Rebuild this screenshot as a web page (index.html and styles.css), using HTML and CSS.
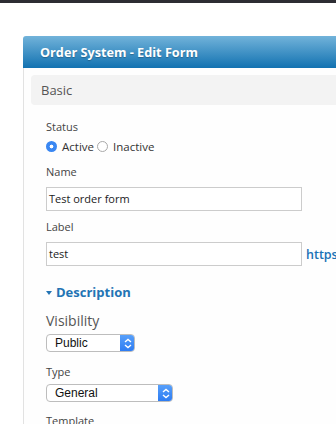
FILE: index.html
```html
<!DOCTYPE html>
<html>
<head>
<meta charset="utf-8">
<link rel="stylesheet" href="styles.css">
</head>
<body>
<div class="topbar"></div>
<div class="panel">
  <div class="panel-header">Order System - Edit Form</div>
  <div class="panel-body">
    <div class="section-bar">Basic</div>
    <div class="form">
      <div class="field-label">Status</div>
      <div class="radio-row">
        <span class="radio checked"></span><span class="radio-text">Active</span>
        <span class="radio"></span><span class="radio-text">Inactive</span>
      </div>
      <div class="field-label gap-name">Name</div>
      <div class="input">Test order form</div>
      <div class="field-label gap-label">Label</div>
      <div class="input-row">
        <div class="input">test</div>
        <a class="link">https</a>
      </div>
      <div class="toggle"><span class="caret"></span>Description</div>
      <div class="big-label">Visibility</div>
      <div class="select w-public"><span class="select-text">Public</span><span class="select-btn"><svg width="8" height="11" viewBox="0 0 8 11"><path d="M1 4 L4 1.5 L7 4 M1 7 L4 9.5 L7 7" fill="none" stroke="#fff" stroke-width="1.4"/></svg></span></div>
      <div class="field-label gap-type">Type</div>
      <div class="select w-general sel-type"><span class="select-text">General</span><span class="select-btn"><svg width="8" height="11" viewBox="0 0 8 11"><path d="M1 4 L4 1.5 L7 4 M1 7 L4 9.5 L7 7" fill="none" stroke="#fff" stroke-width="1.4"/></svg></span></div>
      <div class="field-label gap-template">Template</div>
    </div>
  </div>
</div>
</body>
</html>
```
FILE: styles.css
```css
html, body {
  margin: 0;
  padding: 0;
  background: #ffffff;
  overflow: hidden;
  width: 336px;
  height: 424px;
  font-family: "Open Sans", "DejaVu Sans", sans-serif;
}
.topbar {
  height: 3px;
  background: #2d2d33;
}
.panel {
  margin: 33px 0 0 23px;
  width: 400px;
}
.panel-header {
  height: 32px;
  line-height: 32px;
  padding-left: 17px;
  color: #fff;
  font-weight: 700;
  font-size: 12.7px;
  background: linear-gradient(#72b3da, #1272b1);
  border-radius: 3px 3px 0 0;
  text-shadow: 0 1px 1px rgba(0,0,0,0.25);
}
.panel-body {
  border-left: 1px solid #e2e2e2;
  padding: 7px 0 40px 7px;
  background: #fefefe;
}
.section-bar {
  height: 30px;
  line-height: 30px;
  background: #f3f3f3;
  border-radius: 4px;
  padding-left: 10px;
  font-size: 13px;
  color: #555;
}
.form {
  padding: 14px 0 0 15px;
}
.field-label {
  font-size: 11px;
  line-height: 15px;
  color: #444;
}
.gap-name { margin-top: 11px; }
.gap-label { margin-top: 8px; }
.gap-type { margin-top: 12px; }
.gap-template { margin-top: 11px; }
.radio-row {
  display: flex;
  align-items: center;
  margin-top: 5px;
  height: 14px;
  font-size: 11.5px;
  color: #333;
}
.radio {
  width: 11px;
  height: 11px;
  border-radius: 50%;
  border: 1px solid #a9a9a9;
  background: #fff;
  box-sizing: border-box;
  margin-right: 5px;
}
.radio.checked {
  border: none;
  background: radial-gradient(circle, #fff 0 1.6px, #3a87f2 2.2px);
}
.radio-text { margin-right: 3px; }
.input {
  box-sizing: border-box;
  width: 256px;
  height: 24px;
  margin-top: 8px;
  border: 1px solid #cccccc;
  background: #fff;
  padding-left: 2px;
  font-size: 11px;
  line-height: 22px;
  color: #222;
}
.input-row {
  display: flex;
  align-items: center;
  gap: 4px;
}
.link {
  color: #1a72b6;
  font-weight: 600;
  font-size: 12.5px;
  margin-top: 8px;
}
.toggle {
  margin-top: 17px;
  font-size: 13px;
  font-weight: 700;
  line-height: 18px;
  color: #2374b4;
  display: flex;
  align-items: center;
}
.caret {
  width: 0;
  height: 0;
  border-left: 3.5px solid transparent;
  border-right: 3.5px solid transparent;
  border-top: 4px solid #2374b4;
  margin-right: 4px;
  margin-top: 1px;
}
.big-label {
  margin-top: 10px;
  font-size: 14px;
  line-height: 19px;
  color: #555;
}
.select {
  box-sizing: border-box;
  height: 18px;
  margin-top: 4px;
  border: 1px solid #bdbdbd;
  border-radius: 4px;
  display: flex;
  background: #fff;
  overflow: hidden;
}
.sel-type { margin-top: 5px; }
.w-public { width: 89px; }
.w-general { width: 127px; }
.select-text {
  flex: 1;
  font-family: "Liberation Sans", sans-serif;
  font-size: 12px;
  line-height: 16px;
  color: #111;
  padding-left: 8px;
}
.select-btn {
  width: 15px;
  margin: -1px -1px -1px 0;
  background: linear-gradient(#5aa2fb, #2b7af2);
  display: flex;
  align-items: center;
  justify-content: center;
}
```
